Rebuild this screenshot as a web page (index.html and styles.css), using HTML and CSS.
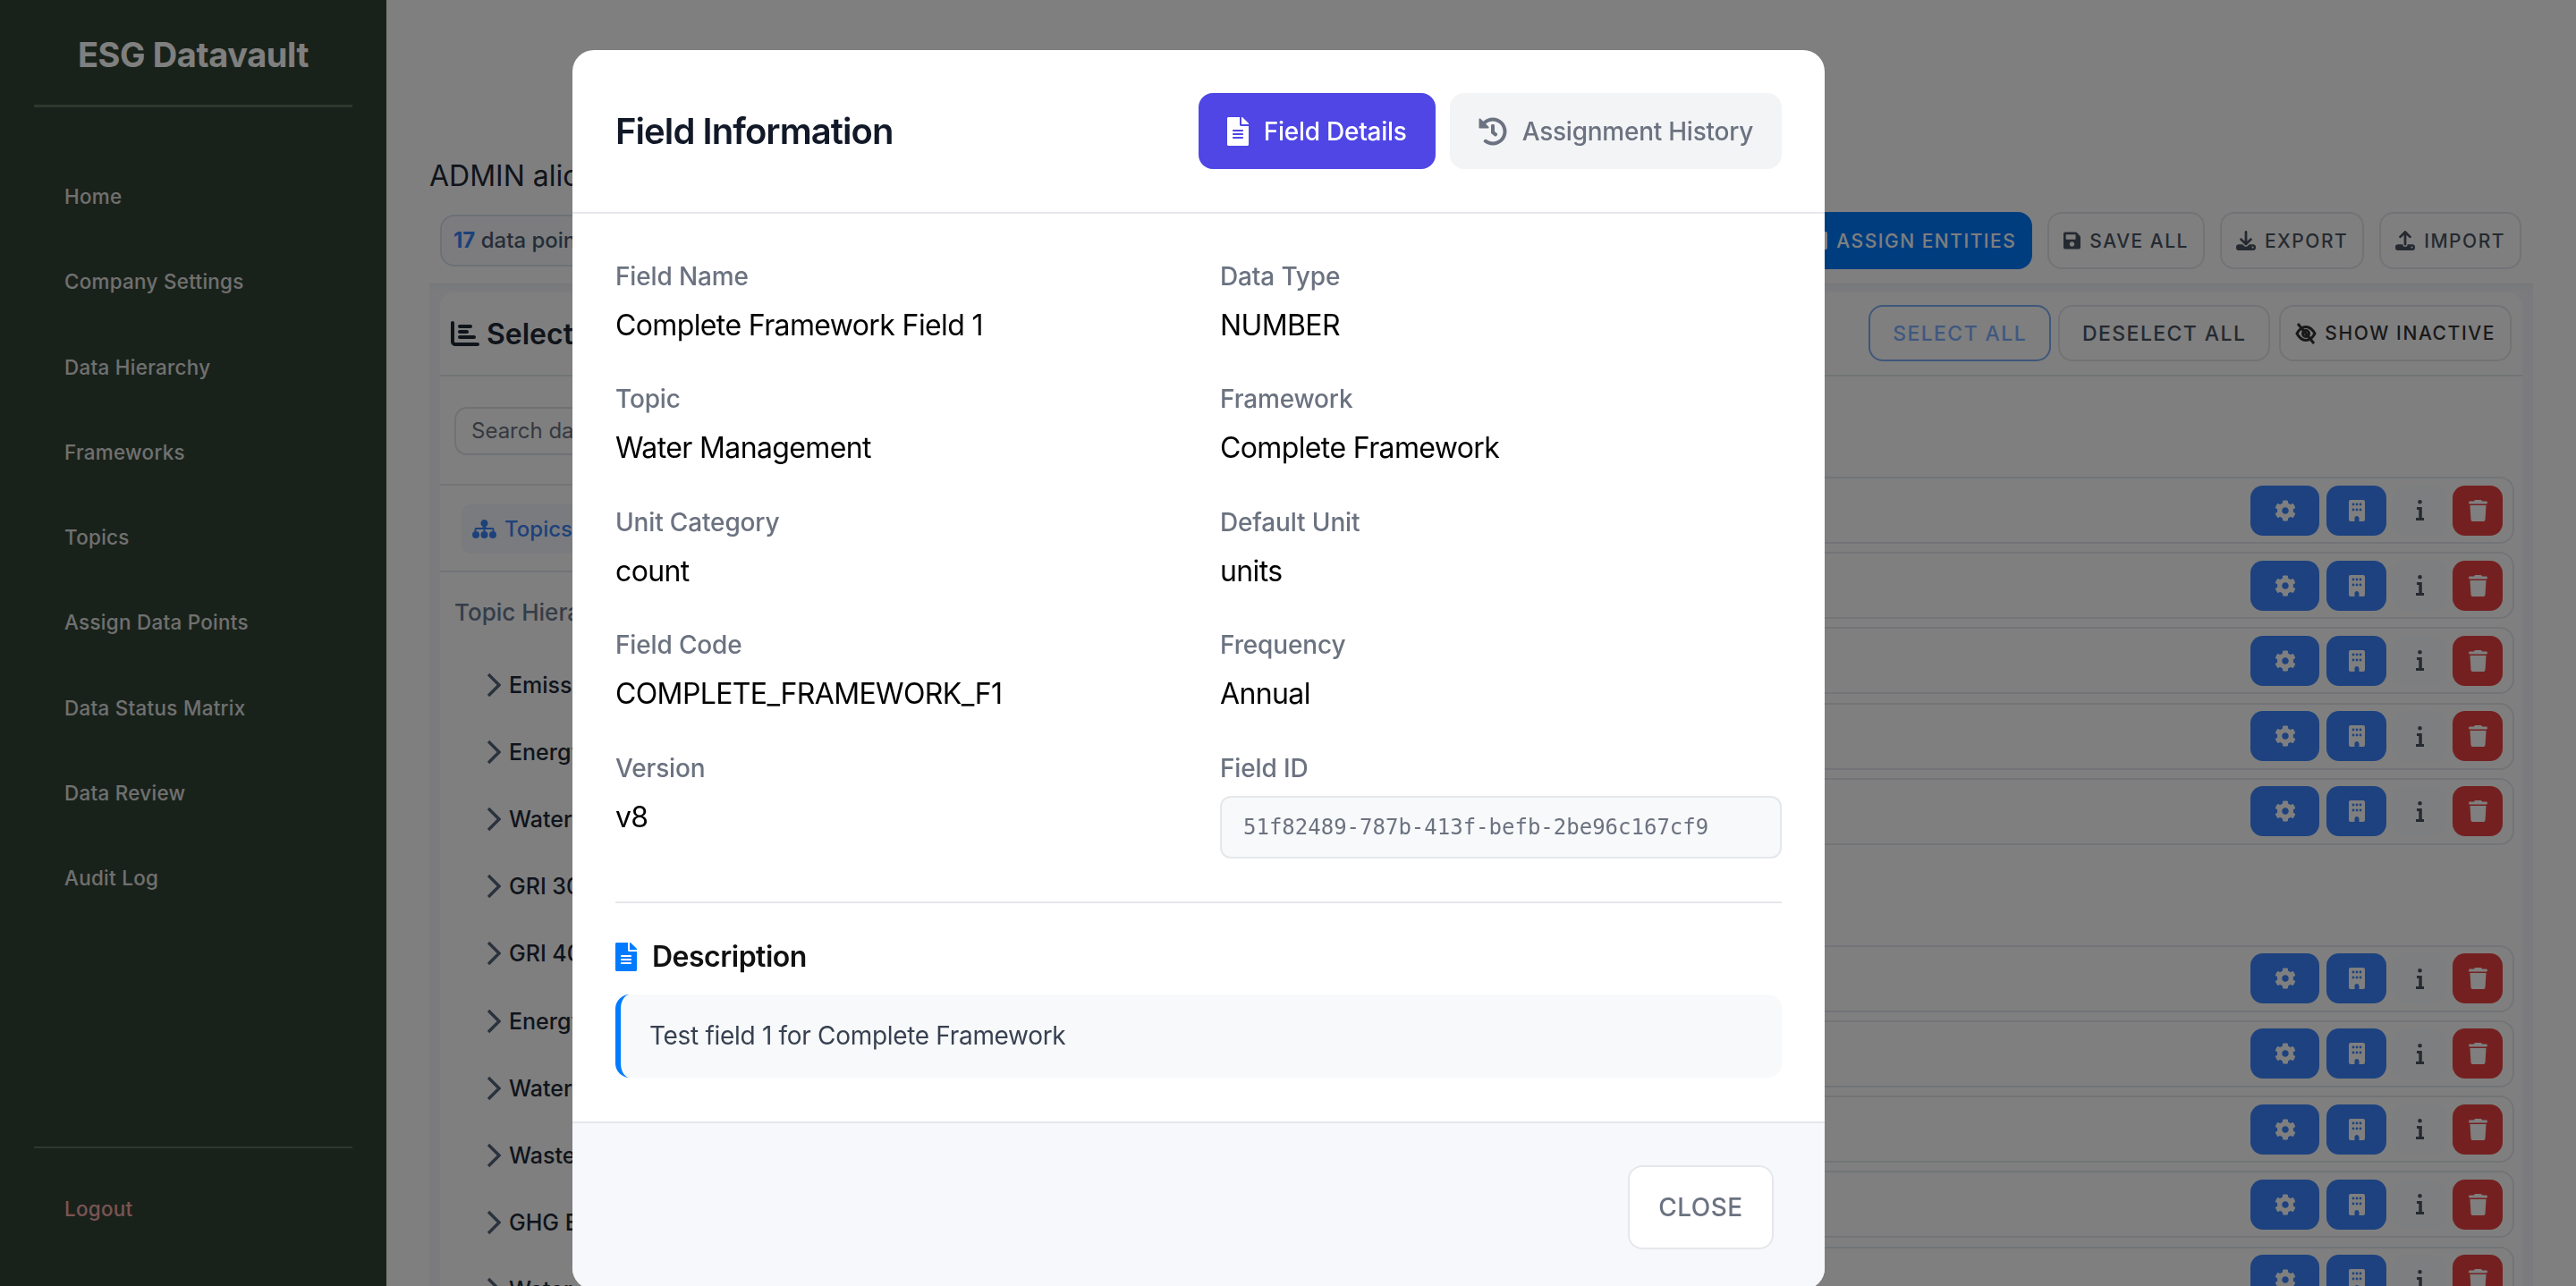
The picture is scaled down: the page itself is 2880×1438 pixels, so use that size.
FILE: index.html
```html
<!DOCTYPE html>
<html lang="en">
<head>
<meta charset="utf-8">
<title>ESG Datavault</title>
<link rel="stylesheet" href="styles.css">
</head>
<body>
<svg class="defs" aria-hidden="true">
  <symbol id="i-file" viewBox="0 0 384 512"><path d="M224 136V0H24C10.7 0 0 10.7 0 24v464c0 13.3 10.7 24 24 24h336c13.3 0 24-10.7 24-24V160H248c-13.2 0-24-10.8-24-24zm64 236c0 6.6-5.4 12-12 12H108c-6.6 0-12-5.4-12-12v-8c0-6.6 5.4-12 12-12h168c6.6 0 12 5.4 12 12v8zm0-64c0 6.6-5.4 12-12 12H108c-6.6 0-12-5.4-12-12v-8c0-6.6 5.4-12 12-12h168c6.6 0 12 5.4 12 12v8zm0-72v8c0 6.6-5.4 12-12 12H108c-6.6 0-12-5.4-12-12v-8c0-6.6 5.4-12 12-12h168c6.6 0 12 5.4 12 12zm96-114.1v6.1H256V0h6.1c6.4 0 12.5 2.5 17 7l97.9 98c4.5 4.5 7 10.6 7 16.9z"/></symbol>
  <symbol id="i-history" viewBox="0 0 512 512"><path d="M504 255.531c.253 136.64-111.18 248.372-247.82 248.468-59.015.042-113.223-20.53-155.822-54.911-11.077-8.94-11.905-25.541-1.839-35.607l11.267-11.267c8.609-8.609 22.353-9.551 31.891-1.984C173.062 425.135 212.781 440 256 440c101.705 0 184-82.311 184-184 0-101.705-82.311-184-184-184-48.814 0-93.149 18.969-126.068 49.932l50.754 50.754c10.08 10.08 2.941 27.314-11.313 27.314H24c-8.837 0-16-7.163-16-16V38.627c0-14.254 17.234-21.393 27.314-11.314l49.372 49.372C129.209 34.136 189.552 8 256 8c136.81 0 247.747 110.78 248 247.531zm-180.912 78.784l9.823-12.63c8.138-10.463 6.253-25.542-4.21-33.679L288 256.349V152c0-13.255-10.745-24-24-24h-16c-13.255 0-24 10.745-24 24v135.651l65.409 50.874c10.463 8.137 25.541 6.253 33.679-4.21z"/></symbol>
  <symbol id="i-cog" viewBox="0 0 512 512"><path d="M487.4 315.7l-42.6-24.6c4.3-23.2 4.3-47 0-70.2l42.6-24.6c4.9-2.8 7.1-8.6 5.5-14-11.1-35.6-30-67.8-54.7-94.6-3.8-4.1-10-5.1-14.8-2.3L380.8 110c-17.9-15.4-38.5-27.3-60.8-35.1V25.8c0-5.6-3.9-10.5-9.4-11.7-36.7-8.2-74.3-7.8-109.2 0-5.5 1.2-9.4 6.1-9.4 11.7V75c-22.2 7.9-42.8 19.8-60.8 35.1L88.7 85.5c-4.9-2.8-11-1.9-14.8 2.3-24.7 26.7-43.6 58.9-54.7 94.6-1.7 5.4.6 11.2 5.5 14L67.3 221c-4.3 23.2-4.3 47 0 70.2l-42.6 24.6c-4.9 2.8-7.1 8.6-5.5 14 11.1 35.6 30 67.8 54.7 94.6 3.8 4.1 10 5.1 14.8 2.3l42.6-24.6c17.9 15.4 38.5 27.3 60.8 35.1v49.2c0 5.6 3.9 10.5 9.4 11.7 36.7 8.2 74.3 7.8 109.2 0 5.5-1.2 9.4-6.1 9.4-11.7v-49.2c22.2-7.9 42.8-19.8 60.8-35.1l42.6 24.6c4.9 2.8 11 1.9 14.8-2.3 24.7-26.7 43.6-58.9 54.7-94.6 1.5-5.5-.7-11.3-5.6-14.1zM256 336c-44.1 0-80-35.9-80-80s35.9-80 80-80 80 35.9 80 80-35.9 80-80 80z"/></symbol>
  <symbol id="i-building" viewBox="0 0 18 24"><path fill-rule="evenodd" d="M2 0h14a2 2 0 012 2v20a2 2 0 01-2 2h-4.500v-3.500a2.500 2.500 0 00-5 0V24H2a2 2 0 01-2-2V2a2 2 0 012-2zM5 3.600a1.400 1.400 0 100 2.800 1.400 1.400 0 000-2.800zm4 0a1.400 1.400 0 100 2.800 1.400 1.400 0 000-2.800zm4 0a1.400 1.400 0 100 2.800 1.400 1.400 0 000-2.800zM5 9.600a1.400 1.400 0 100 2.800 1.400 1.400 0 000-2.800zm4 0a1.400 1.400 0 100 2.800 1.400 1.400 0 000-2.800zm4 0a1.400 1.400 0 100 2.800 1.400 1.400 0 000-2.800z"/></symbol>
  <symbol id="i-info" viewBox="0 0 9 23"><path d="M4.500 0a2.300 2.300 0 110 4.600 2.300 2.300 0 010-4.600zM1 8h5.800v12H9v3H0v-3h3.300v-9H1z"/></symbol>
  <symbol id="i-trash" viewBox="0 0 448 512"><path d="M135.200 17.700L128 32H32C14.300 32 0 46.300 0 64s14.300 32 32 32h384c17.700 0 32-14.300 32-32s-14.300-32-32-32h-96l-7.200-14.300C307.400 6.800 296.300 0 284.200 0H163.800c-12.100 0-23.200 6.800-28.600 17.700zM416 128H32l21.200 339c1.600 25.300 22.600 45 47.900 45h245.800c25.300 0 46.300-19.700 47.900-45L416 128z"/></symbol>
  <symbol id="i-save" viewBox="0 0 448 512"><path d="M433.941 129.941l-83.882-83.882A48 48 0 0 0 316.118 32H48C21.490 32 0 53.490 0 80v352c0 26.510 21.490 48 48 48h352c26.510 0 48-21.490 48-48V163.882a48 48 0 0 0-14.059-33.941zM224 416c-35.346 0-64-28.654-64-64 0-35.346 28.654-64 64-64s64 28.654 64 64c0 35.346-28.654 64-64 64zm96-304.520V212c0 6.627-5.373 12-12 12H76c-6.627 0-12-5.373-12-12V108c0-6.627 5.373-12 12-12h228.520c3.183 0 6.235 1.264 8.485 3.515l3.480 3.480A11.996 11.996 0 0 1 320 111.480z"/></symbol>
  <symbol id="i-download" viewBox="0 0 512 512"><path d="M288 32c0-17.700-14.300-32-32-32s-32 14.300-32 32v242.700l-73.400-73.400c-12.500-12.500-32.800-12.500-45.300 0s-12.500 32.800 0 45.300l128 128c12.500 12.500 32.800 12.500 45.300 0l128-128c12.500-12.500 12.500-32.800 0-45.300s-32.800-12.500-45.300 0L288 274.700V32zM64 352c-35.300 0-64 28.700-64 64v32c0 35.300 28.700 64 64 64h384c35.300 0 64-28.700 64-64v-32c0-35.300-28.700-64-64-64H346.500l-45.300 45.300c-25 25-65.500 25-90.500 0L165.500 352H64zm368 56a24 24 0 1 1 0 48 24 24 0 1 1 0-48z"/></symbol>
  <symbol id="i-upload" viewBox="0 0 512 512"><path d="M288 109.300V352c0 17.700-14.300 32-32 32s-32-14.300-32-32V109.300l-73.400 73.400c-12.500 12.500-32.800 12.500-45.300 0s-12.500-32.800 0-45.300l128-128c12.500-12.500 32.800-12.500 45.300 0l128 128c12.500 12.500 12.500 32.800 0 45.300s-32.800 12.500-45.300 0L288 109.300zM64 352h128c0 35.300 28.700 64 64 64s64-28.700 64-64h128c35.300 0 64 28.700 64 64v32c0 35.300-28.700 64-64 64H64c-35.300 0-64-28.700-64-64v-32c0-35.300 28.700-64 64-64zm368 104a24 24 0 1 0 0-48 24 24 0 1 0 0 48z"/></symbol>
  <symbol id="i-chart" viewBox="0 0 512 512"><path d="M32 32c17.700 0 32 14.300 32 32v336c0 8.800 7.200 16 16 16h400c17.700 0 32 14.300 32 32s-14.300 32-32 32H80c-44.200 0-80-35.800-80-80V64c0-17.700 14.300-32 32-32zm96 96c0-17.700 14.300-32 32-32h192c17.700 0 32 14.300 32 32s-14.300 32-32 32H160c-17.700 0-32-14.300-32-32zm32 64h128c17.700 0 32 14.300 32 32s-14.300 32-32 32H160c-17.700 0-32-14.300-32-32s14.300-32 32-32zm0 96h256c17.700 0 32 14.300 32 32s-14.300 32-32 32H160c-17.700 0-32-14.300-32-32s14.300-32 32-32z"/></symbol>
  <symbol id="i-eye" viewBox="0 0 24 24"><g fill="none" stroke="currentColor" stroke-width="3"><path d="M2 12C5 6.500 9 4.500 12 4.500s7 2 10 7.500c-3 5.500-7 7.500-10 7.500S5 17.500 2 12z"/><circle cx="12" cy="12" r="3.500"/><path d="M3 1l18 22"/></g></symbol>
  <symbol id="i-sitemap" viewBox="0 0 27 21"><path d="M13.500 0a4 4 0 012 7.460V9h7a2 2 0 012 2v3h-2v-3h-8v3h-2v-3h-8v3h-2v-3a2 2 0 012-2h7V7.460A4 4 0 0113.500 0zM4 13a4 4 0 110 8 4 4 0 010-8zm9.500 0a4 4 0 110 8 4 4 0 010-8zm9.500 0a4 4 0 110 8 4 4 0 010-8z"/></symbol>
  <symbol id="i-chev" viewBox="0 0 16 28"><path d="M2 2l12 12L2 26" fill="none" stroke="currentColor" stroke-width="3.400"/></symbol>
</svg>

<div class="app">
  <aside class="sidebar">
    <div class="brand">ESG Datavault</div>
    <nav class="nav">
      <a class="nav-link">Home</a>
      <a class="nav-link">Company Settings</a>
      <a class="nav-link">Data Hierarchy</a>
      <a class="nav-link">Frameworks</a>
      <a class="nav-link">Topics</a>
      <a class="nav-link">Assign Data Points</a>
      <a class="nav-link">Data Status Matrix</a>
      <a class="nav-link">Data Review</a>
      <a class="nav-link">Audit Log</a>
    </nav>
    <div class="side-foot"><a class="nav-link logout">Logout</a></div>
  </aside>

  <main class="main">
    <h1 class="who">ADMIN alice@alpha.com</h1>
    <div class="toolbar">
      <div class="pill"><b>17</b> data points selected</div>
      <div class="tool-actions">
        <button class="btn btn-primary"><svg class="ic ic-20"><use href="#i-building"/></svg>ASSIGN ENTITIES</button>
        <button class="btn"><svg class="ic ic-save"><use href="#i-save"/></svg>SAVE ALL</button>
        <button class="btn"><svg class="ic ic-dl"><use href="#i-download"/></svg>EXPORT</button>
        <button class="btn"><svg class="ic ic-dl"><use href="#i-upload"/></svg>IMPORT</button>
      </div>
    </div>

    <section class="panel">
      <div class="card">
        <header class="card-head">
          <h2 class="card-title"><svg class="ic ic-chart"><use href="#i-chart"/></svg>Select</h2>
          <div class="head-actions">
            <button class="btn-sm btn-blue">SELECT ALL</button>
            <button class="btn-sm">DESELECT ALL</button>
            <button class="btn-sm btn-dark"><svg class="ic ic-eye"><use href="#i-eye"/></svg>SHOW INACTIVE</button>
          </div>
        </header>
        <div class="card-body">
          <div class="left">
            <div class="search-row"><div class="search">Search data</div></div>
            <div class="tabs-row"><div class="topic-tab"><svg class="ic ic-site"><use href="#i-sitemap"/></svg>Topics</div></div>
            <div class="tree-title">Topic Hierarchy</div>
            <ul class="tree">
              <li><svg class="ic ic-chev"><use href="#i-chev"/></svg>Emissions</li>
              <li><svg class="ic ic-chev"><use href="#i-chev"/></svg>Energy</li>
              <li><svg class="ic ic-chev"><use href="#i-chev"/></svg>Water</li>
              <li><svg class="ic ic-chev"><use href="#i-chev"/></svg>GRI 300</li>
              <li><svg class="ic ic-chev"><use href="#i-chev"/></svg>GRI 400</li>
              <li><svg class="ic ic-chev"><use href="#i-chev"/></svg>Energy</li>
              <li><svg class="ic ic-chev"><use href="#i-chev"/></svg>Water</li>
              <li><svg class="ic ic-chev"><use href="#i-chev"/></svg>Waste</li>
              <li><svg class="ic ic-chev"><use href="#i-chev"/></svg>GHG Emissions</li>
              <li><svg class="ic ic-chev"><use href="#i-chev"/></svg>Water</li>
            </ul>
          </div>
          <div class="right">
            <div class="group">
              <div class="row"><button class="act act-gear"><svg class="ic ic-cog"><use href="#i-cog"/></svg></button><button class="act act-bld"><svg class="ic ic-bld"><use href="#i-building"/></svg></button><button class="act act-info"><svg class="ic ic-info"><use href="#i-info"/></svg></button><button class="act act-del"><svg class="ic ic-del"><use href="#i-trash"/></svg></button></div>
              <div class="row"><button class="act act-gear"><svg class="ic ic-cog"><use href="#i-cog"/></svg></button><button class="act act-bld"><svg class="ic ic-bld"><use href="#i-building"/></svg></button><button class="act act-info"><svg class="ic ic-info"><use href="#i-info"/></svg></button><button class="act act-del"><svg class="ic ic-del"><use href="#i-trash"/></svg></button></div>
              <div class="row"><button class="act act-gear"><svg class="ic ic-cog"><use href="#i-cog"/></svg></button><button class="act act-bld"><svg class="ic ic-bld"><use href="#i-building"/></svg></button><button class="act act-info"><svg class="ic ic-info"><use href="#i-info"/></svg></button><button class="act act-del"><svg class="ic ic-del"><use href="#i-trash"/></svg></button></div>
              <div class="row"><button class="act act-gear"><svg class="ic ic-cog"><use href="#i-cog"/></svg></button><button class="act act-bld"><svg class="ic ic-bld"><use href="#i-building"/></svg></button><button class="act act-info"><svg class="ic ic-info"><use href="#i-info"/></svg></button><button class="act act-del"><svg class="ic ic-del"><use href="#i-trash"/></svg></button></div>
              <div class="row"><button class="act act-gear"><svg class="ic ic-cog"><use href="#i-cog"/></svg></button><button class="act act-bld"><svg class="ic ic-bld"><use href="#i-building"/></svg></button><button class="act act-info"><svg class="ic ic-info"><use href="#i-info"/></svg></button><button class="act act-del"><svg class="ic ic-del"><use href="#i-trash"/></svg></button></div>
            </div>
            <div class="group">
              <div class="row"><button class="act act-gear"><svg class="ic ic-cog"><use href="#i-cog"/></svg></button><button class="act act-bld"><svg class="ic ic-bld"><use href="#i-building"/></svg></button><button class="act act-info"><svg class="ic ic-info"><use href="#i-info"/></svg></button><button class="act act-del"><svg class="ic ic-del"><use href="#i-trash"/></svg></button></div>
              <div class="row"><button class="act act-gear"><svg class="ic ic-cog"><use href="#i-cog"/></svg></button><button class="act act-bld"><svg class="ic ic-bld"><use href="#i-building"/></svg></button><button class="act act-info"><svg class="ic ic-info"><use href="#i-info"/></svg></button><button class="act act-del"><svg class="ic ic-del"><use href="#i-trash"/></svg></button></div>
              <div class="row"><button class="act act-gear"><svg class="ic ic-cog"><use href="#i-cog"/></svg></button><button class="act act-bld"><svg class="ic ic-bld"><use href="#i-building"/></svg></button><button class="act act-info"><svg class="ic ic-info"><use href="#i-info"/></svg></button><button class="act act-del"><svg class="ic ic-del"><use href="#i-trash"/></svg></button></div>
              <div class="row"><button class="act act-gear"><svg class="ic ic-cog"><use href="#i-cog"/></svg></button><button class="act act-bld"><svg class="ic ic-bld"><use href="#i-building"/></svg></button><button class="act act-info"><svg class="ic ic-info"><use href="#i-info"/></svg></button><button class="act act-del"><svg class="ic ic-del"><use href="#i-trash"/></svg></button></div>
              <div class="row"><button class="act act-gear"><svg class="ic ic-cog"><use href="#i-cog"/></svg></button><button class="act act-bld"><svg class="ic ic-bld"><use href="#i-building"/></svg></button><button class="act act-info"><svg class="ic ic-info"><use href="#i-info"/></svg></button><button class="act act-del"><svg class="ic ic-del"><use href="#i-trash"/></svg></button></div>
            </div>
          </div>
        </div>
      </div>
    </section>
  </main>
</div>

<div class="backdrop"></div>

<div class="modal">
  <header class="modal-head">
    <h2 class="modal-title">Field Information</h2>
    <div class="modal-tabs">
      <button class="tab tab-on"><svg class="ic ic-tabfile"><use href="#i-file"/></svg>Field Details</button>
      <button class="tab"><svg class="ic ic-tabhist"><use href="#i-history"/></svg>Assignment History</button>
    </div>
  </header>
  <div class="modal-body">
    <div class="fields">
      <div class="field"><div class="f-label">Field Name</div><div class="f-value">Complete Framework Field 1</div></div>
      <div class="field"><div class="f-label">Data Type</div><div class="f-value">NUMBER</div></div>
      <div class="field"><div class="f-label">Topic</div><div class="f-value">Water Management</div></div>
      <div class="field"><div class="f-label">Framework</div><div class="f-value">Complete Framework</div></div>
      <div class="field"><div class="f-label">Unit Category</div><div class="f-value">count</div></div>
      <div class="field"><div class="f-label">Default Unit</div><div class="f-value">units</div></div>
      <div class="field"><div class="f-label">Field Code</div><div class="f-value">COMPLETE_FRAMEWORK_F1</div></div>
      <div class="field"><div class="f-label">Frequency</div><div class="f-value">Annual</div></div>
      <div class="field"><div class="f-label">Version</div><div class="f-value">v8</div></div>
      <div class="field"><div class="f-label">Field ID</div><div class="f-code">51f82489-787b-413f-befb-2be96c167cf9</div></div>
    </div>
    <div class="desc">
      <h3 class="desc-title"><svg class="ic ic-descfile"><use href="#i-file"/></svg>Description</h3>
      <p class="desc-text">Test field 1 for Complete Framework</p>
    </div>
  </div>
  <footer class="modal-foot"><button class="close">CLOSE</button></footer>
</div>
</body>
</html>
```
FILE: styles.css
```css
* { box-sizing: border-box; }
html, body { margin: 0; height: 100%; overflow: hidden; }
body { font-family: Inter, "Liberation Sans", sans-serif; background: #fff; color: #1f2937; }
button { font-family: inherit; cursor: pointer; }
h1, h2, h3, p, ul { margin: 0; padding: 0; }
.defs { width: 0; height: 0; display: block; }
.ic { fill: currentColor; flex: none; display: block; }

.app { display: flex; height: 1438px; }

/* sidebar */
.sidebar { width: 432px; flex: none; background: #324434; display: flex; flex-direction: column; padding: 0 38px; }
.brand { height: 120px; padding-top: 39px; line-height: 44px; font-size: 38px; font-weight: 700; letter-spacing: -.4px; color: #fff; text-align: center; border-bottom: 3px solid #5a705c; }
.nav { display: flex; flex-direction: column; padding-top: 52px; }
.nav-link { display: block; height: 95.300px; line-height: 95.300px; padding-left: 34px; font-size: 22.400px; font-weight: 500; color: #e0e0e0; letter-spacing: .3px; }
.side-foot { margin-top: auto; border-top: 2px solid #5a705c; padding-top: 20px; height: 156px; }
.nav-link.logout { color: #f2a8a8; }

/* main */
.main { flex: 1; min-width: 0; display: flex; flex-direction: column; padding-left: 48px; padding-right: 48px; }
.who { margin-top: 173px; height: 48px; line-height: 48px; font-size: 32px; font-weight: 400; color: #1f2937; white-space: nowrap; }
.toolbar { display: flex; align-items: flex-start; justify-content: space-between; margin-top: 16px; padding: 0 13px 0 12px; height: 64px; }
.pill { margin-top: 3px; height: 58px; line-height: 54px; padding: 0 13px; border: 2px solid #dbe3ef; border-radius: 16px; font-size: 24px; font-weight: 500; color: #4b5a70; white-space: nowrap; background: #f8f9fc; }
.pill b { color: #3b82f6; font-weight: 700; }
.tool-actions { display: flex; gap: 17px; }
.btn { height: 64px; display: flex; align-items: center; gap: 10px; padding: 0 16px; border: 2px solid #e3e6ec; border-radius: 16px; background: #fff; color: #4b5563; font-size: 21px; font-weight: 500; letter-spacing: 1.500px; white-space: nowrap; }
.btn-primary { background: #007bff; border-color: #007bff; color: #fff; }
.ic-20 { width: 15px; height: 20px; }
.ic-save { width: 19px; height: 22px; }
.ic-dl { width: 22px; height: 22px; }

.panel { margin-top: 16px; padding: 10px 12px 0; background: #f6f7fa; box-shadow: inset 0 10px 10px -8px #eceef1; flex: 1; min-height: 0; overflow: hidden; }
.card { background: #fff; border-radius: 16px 16px 0 0; height: 100%; }
.card-head { height: 94px; display: flex; align-items: flex-start; justify-content: space-between; padding: 14px 12px 0 12px; border-bottom: 2px solid #e5e8ee; }
.card-title { display: flex; align-items: center; gap: 8px; height: 64px; font-size: 32px; font-weight: 600; color: #1f2937; white-space: nowrap; }
.ic-chart { width: 32px; height: 32px; }
.head-actions { display: flex; gap: 8px; }
.btn-sm { height: 63px; padding: 0 25px; display: flex; align-items: center; gap: 9px; border: 2px solid #e3e6ec; border-radius: 16px; background: #fff; color: #4b5563; font-size: 23px; font-weight: 500; letter-spacing: 1.400px; white-space: nowrap; }
.btn-blue { border-color: #7eaef5; color: #80b0ff; }
.btn-dark { color: #333; font-size: 21px; letter-spacing: 1.600px; padding: 0 16px; margin-left: 2px; }
.ic-eye { width: 24px; height: 24px; }

.card-body { display: grid; grid-template-columns: 640px 1fr; }
.left { min-width: 0; }
.search-row { height: 122px; padding: 34px 16px 0; border-bottom: 2px solid #e5e8ee; }
.search { height: 54px; line-height: 50px; padding: 0 17px; border: 2px solid #dfe3ea; border-radius: 14px; font-size: 24px; color: #6b7280; }
.tabs-row { height: 97px; padding: 21px 24px 0; border-bottom: 2px solid #e5e8ee; }
.topic-tab { display: inline-flex; align-items: center; gap: 9px; height: 55px; padding: 0 12px; border-radius: 10px; background: #f4f7fd; color: #3b82f6; font-size: 24px; font-weight: 500; }
.ic-site { width: 27px; height: 21px; }
.tree-title { height: 88px; line-height: 90px; padding-left: 16px; font-size: 26px; font-weight: 500; color: #6b7a90; white-space: nowrap; }
.tree { list-style: none; padding-left: 52px; }
.tree li { height: 75.200px; display: flex; align-items: center; gap: 9px; font-size: 25px; font-weight: 500; color: #1f2937; white-space: nowrap; }
.ic-chev { width: 16px; height: 28px; color: #55647c; }

.right { padding: 112px 9px 0 0; display: flex; flex-direction: column; gap: 112px; }
.group { display: flex; flex-direction: column; gap: 9.200px; }
.row { height: 75px; border: 2px solid #e5e8ee; border-radius: 16px; display: flex; align-items: center; justify-content: flex-end; gap: 8px; padding-right: 11px; }
.act { height: 56px; border: 0; border-radius: 14px; display: flex; align-items: center; justify-content: center; padding: 0; color: #fff; }
.act-gear { width: 77px; background: #3b84fe; }
.act-bld { width: 67px; background: #3b84fe; }
.act-info { width: 60px; background: #fbfcfe; color: #4b5563; margin-left: -1px; }
.act-del { width: 56px; background: #ea4040; margin-left: -1px; }
.ic-cog { width: 24px; height: 24px; }
.ic-bld { width: 18px; height: 24px; }
.ic-info { width: 9px; height: 23px; }
.ic-del { width: 21px; height: 24px; }

/* overlay + modal */
.backdrop { position: fixed; inset: 0; background: rgba(0, 0, 0, .5); backdrop-filter: blur(.5px); }
.modal { position: fixed; left: 640px; top: 56px; width: 1400px; height: 1386px; background: #fff; border-radius: 24px; overflow: hidden; display: flex; flex-direction: column; }
.modal-head { height: 183px; flex: none; display: flex; align-items: center; justify-content: space-between; padding: 0 48px; border-bottom: 2px solid #e6e7ec; }
.modal-title { font-size: 40px; font-weight: 600; color: #111827; letter-spacing: -.93px; }
.modal-tabs { display: flex; gap: 16px; }
.tab { height: 85px; display: flex; align-items: center; gap: 17px; padding: 0 32px; border: 0; border-radius: 16px; background: #f3f4f6; color: #6b7280; font-size: 28px; font-weight: 500; letter-spacing: -.25px; }
.tab-on { background: #4f46e5; color: #fff; }
.ic-tabfile { width: 24px; height: 32px; }
.ic-tabhist { width: 32px; height: 32px; }

.modal-body { flex: 1; padding: 50px 48px 0; }
.fields { display: grid; grid-template-columns: 628px 628px; column-gap: 48px; row-gap: 38.400px; }
.field { min-height: 99px; }
.f-label { height: 40px; line-height: 40px; font-size: 28px; font-weight: 500; color: #6b7280; letter-spacing: -.15px; }
.f-value { margin-top: 11px; height: 48px; line-height: 48px; font-size: 32px; color: #000; letter-spacing: -.62px; }
.f-code { margin-top: 11px; height: 70px; line-height: 66px; padding: 0 24px; background: #f8f9fa; border: 2px solid #e5e7eb; border-radius: 12px; font-family: "DejaVu Sans Mono", monospace; font-size: 24px; color: #6b7280; }
.desc { margin-top: 48px; border-top: 2px solid #e5e7eb; padding-top: 44px; }
.desc-title { display: flex; align-items: center; gap: 17px; height: 32px; font-size: 32px; font-weight: 600; color: #111; letter-spacing: -.5px; }
.ic-descfile { width: 24px; height: 32px; color: #007bff; }
.desc-text { margin-top: 26px; height: 93px; line-height: 93px; padding-left: 32px; border-left: 6px solid #007bff; border-radius: 16px; background: #f8f9fa; font-size: 28px; color: #374151; letter-spacing: -.31px; }
.modal-foot { height: 188px; flex: none; display: flex; justify-content: flex-end; padding: 47px 57px 0 0; background: #f7f8fc; border-top: 2px solid #e5e7eb; }
.close { height: 94px; width: 163px; background: #fff; border: 2px solid #e5e7eb; border-radius: 16px; color: #6b7280; font-size: 28px; font-weight: 500; letter-spacing: .5px; }
```
